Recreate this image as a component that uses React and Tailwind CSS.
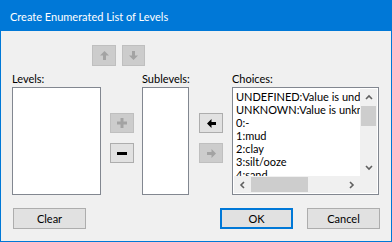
const font = { fontFamily: 'Lato, "Noto Sans", sans-serif' };

const Arrow = ({ dir, color }) => {
  const rot = { left: 0, up: 90, right: 180, down: 270 }[dir];
  return (
    <svg width="9" height="9" viewBox="0 0 9 9" style={{ transform: `rotate(${rot}deg)` }}>
      <polygon points="0,4.5 4.5,0 4.5,3 9,3 9,6 4.5,6 4.5,9" fill={color} />
    </svg>
  );
};

const Chevron = ({ dir }) => {
  const pts = {
    up: '1,5 4,2 7,5',
    down: '1,2 4,5 7,2',
    left: '5,1 2,4 5,7',
    right: '2,1 5,4 2,7',
  }[dir];
  return (
    <svg width="8" height="8" viewBox="0 0 8 8">
      <polyline points={pts} fill="none" stroke="#606060" strokeWidth="1.6" />
    </svg>
  );
};

const IconButton = ({ disabled, children, className = '' }) => (
  <div
    className={`flex items-center justify-center border ${
      disabled ? 'bg-[#cccccc] border-[#bfbfbf]' : 'bg-[#e1e1e1] border-[#adadad]'
    } ${className}`}
  >
    {children}
  </div>
);

const choices = [
  'UNDEFINED:Value is undefined',
  'UNKNOWN:Value is unknown',
  '0:-',
  '1:mud',
  '2:clay',
  '3:silt/ooze',
  '4:sand',
];

export default function App() {
  return (
    <div
      className="w-[392px] h-[242px] flex flex-col border border-[#0078d7] bg-[#f0f0f0] text-[11px] text-black"
      style={font}
    >
      <div className="h-[30px] shrink-0 bg-[#0078d7] text-white text-[11px] pl-[9px] flex items-center leading-[15px]">
        Create Enumerated List of Levels
      </div>

      <div className="flex-1 flex flex-col">
        <div className="mt-[14px] pl-[91px] flex gap-[6px]">
          <IconButton disabled className="w-[24px] h-[21px]">
            <Arrow dir="up" color="#a3a3a3" />
          </IconButton>
          <IconButton disabled className="w-[23px] h-[21px]">
            <Arrow dir="down" color="#a3a3a3" />
          </IconButton>
        </div>

        <div className="flex items-start pl-[11px]">
          <div className="w-[89px]">
            <div className="h-[21px] pt-[6px] leading-[14px]">Levels:</div>
            <div className="h-[108px] border border-[#828790] bg-white" />
          </div>

          <div className="ml-[9px] w-[24px] mt-[47px] flex flex-col gap-[10px]">
            <IconButton disabled className="h-[20px]">
              <svg width="10" height="10" viewBox="0 0 10 10">
                <rect x="3.5" y="0" width="3" height="10" fill="#a3a3a3" />
                <rect x="0" y="3.5" width="10" height="3" fill="#a3a3a3" />
              </svg>
            </IconButton>
            <IconButton className="h-[20px]">
              <div className="w-[10px] h-[3px] bg-black" />
            </IconButton>
          </div>

          <div className="ml-[8px] w-[47px]">
            <div className="h-[21px] pt-[6px] leading-[14px] whitespace-nowrap">Sublevels:</div>
            <div className="h-[108px] border border-[#828790] bg-white" />
          </div>

          <div className="ml-[10px] w-[24px] mt-[47px] flex flex-col gap-[10px]">
            <IconButton className="h-[20px]">
              <Arrow dir="left" color="#000000" />
            </IconButton>
            <IconButton disabled className="h-[20px]">
              <Arrow dir="right" color="#a3a3a3" />
            </IconButton>
          </div>

          <div className="ml-[9px] w-[147px]">
            <div className="h-[21px] pt-[6px] leading-[14px]">Choices:</div>
            <div className="h-[108px] border border-[#828790] bg-white p-[1px] grid grid-cols-[1fr_17px] grid-rows-[1fr_17px]">
              <div className="overflow-hidden pl-[2px] pt-[1px] leading-[13px] whitespace-nowrap">
                {choices.map((c) => (
                  <div key={c} className="h-[13px]">{c}</div>
                ))}
              </div>
              <div className="bg-[#f0f0f0] flex flex-col items-center">
                <div className="h-[17px] flex items-center justify-center">
                  <Chevron dir="up" />
                </div>
                <div className="w-[15px] h-[20px] bg-[#cdcdcd]" />
                <div className="flex-1" />
                <div className="h-[17px] flex items-center justify-center">
                  <Chevron dir="down" />
                </div>
              </div>
              <div className="bg-[#f0f0f0] flex items-center">
                <div className="w-[17px] flex justify-center">
                  <Chevron dir="left" />
                </div>
                <div className="w-[57px] h-[15px] bg-[#cdcdcd]" />
                <div className="flex-1" />
                <div className="w-[17px] flex justify-center">
                  <Chevron dir="right" />
                </div>
              </div>
              <div className="bg-[#f0f0f0]" />
            </div>
          </div>
        </div>

        <div className="mt-[13px] pl-[12px] flex">
          <div className="w-[73px] h-[21px] border border-[#adadad] bg-[#e1e1e1] flex items-center justify-center leading-[15px]">
            Clear
          </div>
          <div className="ml-[134px] w-[73px] h-[21px] border-2 border-[#0078d7] bg-[#e1e1e1] flex items-center justify-center leading-[15px]">
            OK
          </div>
          <div className="ml-[14px] w-[73px] h-[21px] border border-[#adadad] bg-[#e1e1e1] flex items-center justify-center leading-[15px]">
            Cancel
          </div>
        </div>
      </div>
    </div>
  );
}
